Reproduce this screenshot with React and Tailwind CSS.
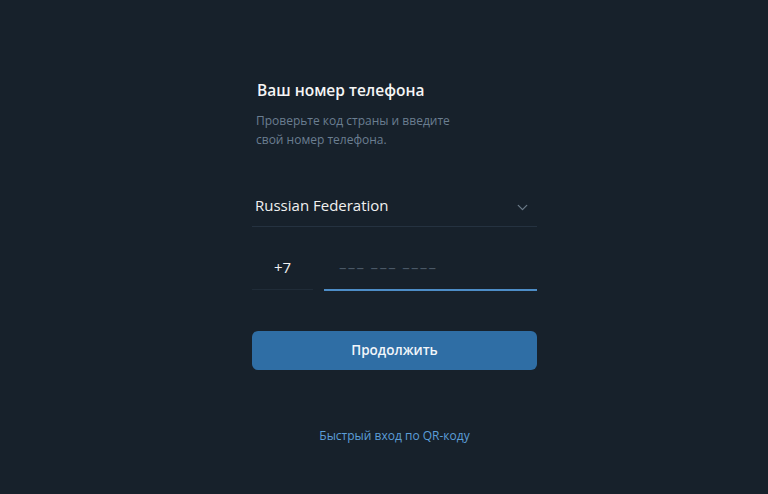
import { ChevronDown } from "lucide-react";

function App() {
  return (
    <div
      className="w-full h-[494px] bg-[#17212b] text-white flex justify-center"
      style={{ fontFamily: '"Open Sans", "Noto Sans", sans-serif' }}
    >
      <div className="w-[285px] pt-[78px] ml-[21px]">
        <h1 className="pl-[5px] text-[15.5px] font-semibold leading-6 text-[#f5f5f5]">
          Ваш номер телефона
        </h1>
        <p className="pl-[4px] mt-[9px] text-[12px] leading-[19px] text-[#6b7e91]">
          Проверьте код страны и введите
          <br />
          свой номер телефона.
        </p>

        <div className="mt-[36px] flex items-center justify-between h-[42px] border-b border-[#253240] pl-[3px] pr-[6px]">
          <span className="text-[15px] text-[#f0f0f0]">Russian Federation</span>
          <ChevronDown size={17} strokeWidth={1.8} className="text-[#6b7a88] mt-[3px]" />
        </div>

        <div className="mt-[20px] flex gap-[11px]">
          <div className="w-[61px] h-[43px] flex items-center justify-center border-b border-[#202c38] text-[15px] text-[#f0f0f0] pb-[2px]">
            +7
          </div>
          <div className="flex-1 h-[44px] flex items-center border-b-2 border-[#4d8dc7] pl-[15px] pb-[2px]">
            <span className="text-[15px] tracking-[1.3px] text-[#4a5866]">––– ––– ––––</span>
          </div>
        </div>

        <button className="mt-[40px] w-full h-[39px] rounded-[6px] bg-[#2f6ea5] text-[13.5px] font-semibold text-[#f2f6fa]">
          Продолжить
        </button>

        <div className="mt-[57px] text-center text-[12px] text-[#5c9ed8]">
          Быстрый вход по QR-коду
        </div>
      </div>
    </div>
  );
}

export default App;
